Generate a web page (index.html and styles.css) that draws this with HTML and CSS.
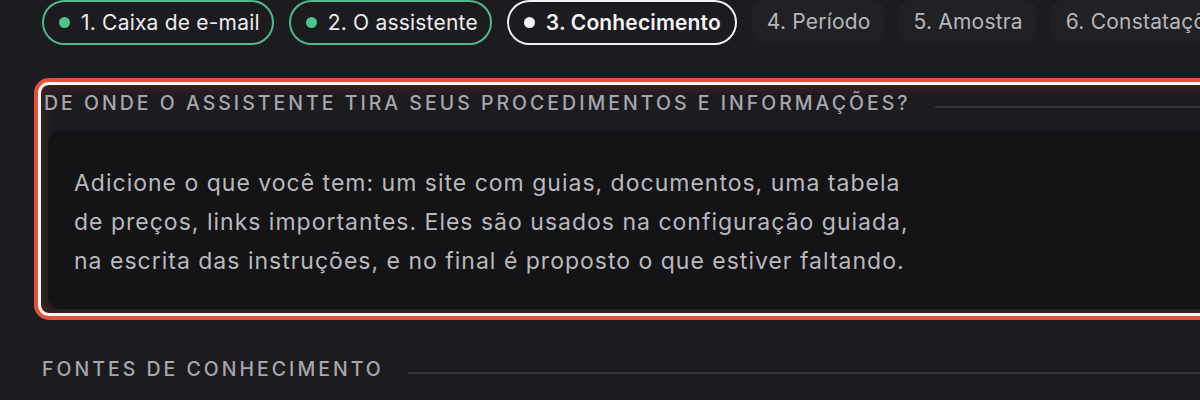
FILE: index.html
```html
<!DOCTYPE html>
<html lang="pt">
<head>
<meta charset="utf-8">
<title>Conhecimento</title>
<link rel="stylesheet" href="styles.css">
</head>
<body>
<div class="page">
  <nav class="steps">
    <span class="step done"><span class="dot"></span>1. Caixa de e-mail</span>
    <span class="step done"><span class="dot"></span>2. O assistente</span>
    <span class="step current"><span class="dot"></span>3. Conhecimento</span>
    <span class="step todo">4. Período</span>
    <span class="step todo">5. Amostra</span>
    <span class="step todo">6. Constatações</span>
  </nav>

  <section class="focus">
    <div class="section-head">
      <h2>De onde o assistente tira seus procedimentos e informações?</h2>
      <span class="rule"></span>
    </div>
    <div class="card">
      <p>Adicione o que você tem: um site com guias, documentos, uma tabela<br>de preços, links importantes. Eles são usados na configuração guiada,<br>na escrita das instruções, e no final é proposto o que estiver faltando.</p>
    </div>
  </section>

  <div class="section-head sources">
    <h2>Fontes de conhecimento</h2>
    <span class="rule"></span>
  </div>
</div>
</body>
</html>
```

FILE: styles.css
```css
html, body {
  margin: 0;
  padding: 0;
  background: #1c1b20;
  overflow: hidden;
  height: 400px;
}
body {
  font-family: Inter, "Noto Sans", sans-serif;
  color: #e6e6e8;
}
.page {
  padding-left: 42px;
  width: 1300px;
}
.steps {
  display: flex;
  gap: 15px;
  white-space: nowrap;
}
.step {
  display: flex;
  align-items: center;
  height: 45px;
  box-sizing: border-box;
  font-size: 21px;
  letter-spacing: 0.2px;
  border-radius: 23px;
}
.step.done {
  border: 2px solid #4fb98a;
  padding: 0 12px 0 15px;
  color: #ececee;
}
.step.current {
  border: 2px solid #f2f2f4;
  padding: 0 14px 0 15px;
  color: #f4f4f6;
  font-weight: 600;
  letter-spacing: 0.15px;
}
.step .dot {
  width: 11px;
  height: 11px;
  border-radius: 50%;
  margin-right: 11px;
  background: #4fc28c;
}
.step.current .dot {
  background: #f4f4f6;
}
.step.todo {
  background: #212125;
  border-radius: 12px;
  padding: 0 13px 0 15px;
  color: #b6b6bb;
  height: 43px;
}
.focus {
  margin-top: 40px;
  margin-left: -1px;
  padding: 0 0 4px 0;
  border-radius: 8px;
  box-shadow: 0 0 0 3px #fbf7f5, 0 0 0 7px #e0533a, inset 0 0 14px rgba(200, 70, 50, 0.35);
}
.section-head {
  display: flex;
  align-items: center;
  gap: 24px;
}
.section-head h2 {
  margin: 0;
  font-size: 19.5px;
  font-weight: 500;
  letter-spacing: 3px;
  text-transform: uppercase;
  color: #a6a6ac;
  white-space: nowrap;
  line-height: 36px;
}
.focus .section-head {
  margin-left: 3px;
}
.section-head .rule {
  flex: 1;
  height: 2px;
  background: #36363c;
  margin-top: 8px;
}
.card {
  margin: 10px 0 0 7px;
  background: #141417;
  border-radius: 12px;
  padding: 33px 26px 28px 26px;
}
.card p {
  margin: 0;
  font-size: 23px;
  letter-spacing: 1px;
  line-height: 39px;
  color: #b9b9be;
}
.sources {
  margin-top: 38px;
}
```
